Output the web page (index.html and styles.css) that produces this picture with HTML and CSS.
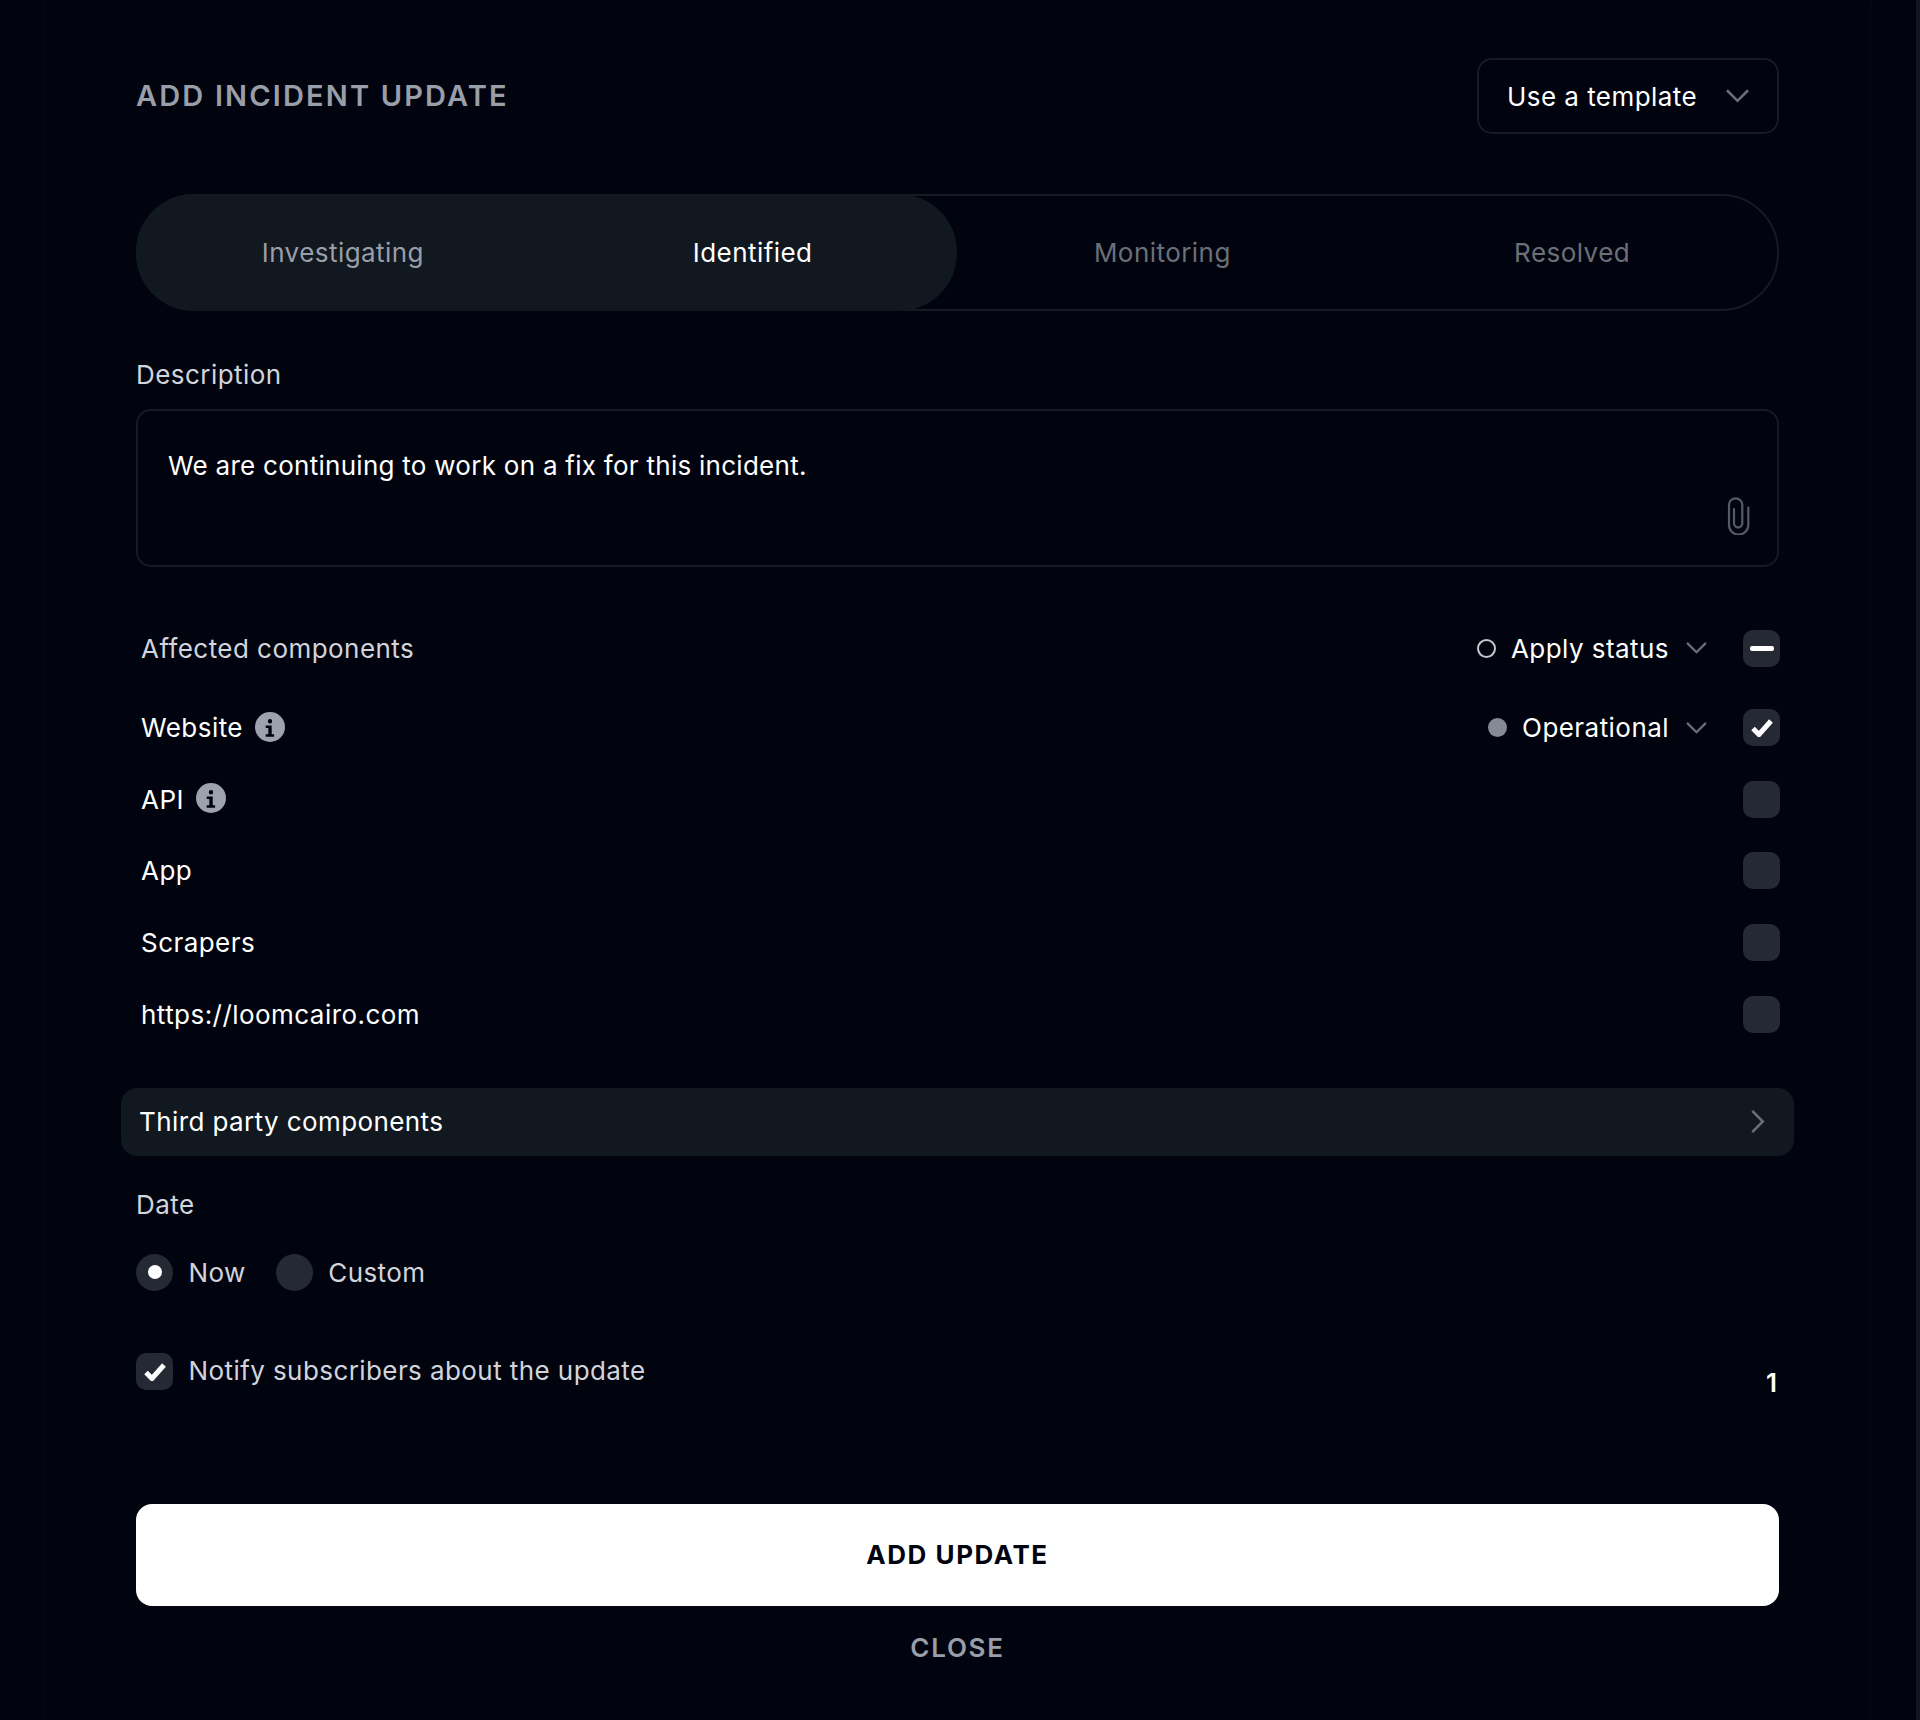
FILE: index.html
```html
<!DOCTYPE html>
<html lang="en">
<head>
    <meta charset="UTF-8">
    <meta name="viewport" content="width=device-width, initial-scale=1.0">
    <title>Add incident update</title>
    <link rel="stylesheet" href="styles.css">
</head>
<body>
    <div class="panel">
        <div class="header">
            <h1>ADD INCIDENT UPDATE</h1>
            <button type="button" class="template-btn">
                Use a template
                <svg class="chevron chevron-lg" viewBox="0 0 24 14"><path d="M1 1l11 11L23 1"/></svg>
            </button>
        </div>

        <div class="tabs">
            <div class="tab-pill"></div>
            <div class="tab tab-done">Investigating</div>
            <div class="tab tab-active">Identified</div>
            <div class="tab">Monitoring</div>
            <div class="tab">Resolved</div>
        </div>

        <div class="field-label description-label">Description</div>
        <div class="textarea">
            We are continuing to work on a fix for this incident.
            <svg class="clip" viewBox="0 0 24 38"><path d="M7 11.3V26.3a4.15 4.15 0 0 0 8.3 0V8a6.65 6.65 0 0 0-13.3 0V28a9.65 9.65 0 0 0 19.3 0V9.7"/></svg>
        </div>

        <div class="components">
            <div class="row row-head">
                <span class="row-name">Affected components</span>
                <div class="status">
                    <span class="dot dot-empty"></span>
                    Apply status
                    <svg class="chevron" viewBox="0 0 24 14"><path d="M1 1l11 11L23 1"/></svg>
                </div>
                <span class="check"><span class="dash"></span></span>
            </div>
            <div class="row">
                <span class="row-name">Website</span>
                <svg class="info" viewBox="0 0 30 30"><circle cx="15" cy="15" r="15"/><path d="M15 7a2.2 2.2 0 1 1 0 4.4 2.2 2.2 0 0 1 0-4.4zM10.7 13.5h6v8.8h2.4v2.4h-8.4v-2.4h2.6v-6.4h-2.6z"/></svg>
                <div class="status">
                    <span class="dot dot-grey"></span>
                    Operational
                    <svg class="chevron" viewBox="0 0 24 14"><path d="M1 1l11 11L23 1"/></svg>
                </div>
                <span class="check"><svg viewBox="0 0 22 19"><path d="M2 10.5l6 6L20 3"/></svg></span>
            </div>
            <div class="row">
                <span class="row-name">API</span>
                <svg class="info" viewBox="0 0 30 30"><circle cx="15" cy="15" r="15"/><path d="M15 7a2.2 2.2 0 1 1 0 4.4 2.2 2.2 0 0 1 0-4.4zM10.7 13.5h6v8.8h2.4v2.4h-8.4v-2.4h2.6v-6.4h-2.6z"/></svg>
                <span class="check check-end"></span>
            </div>
            <div class="row">
                <span class="row-name">App</span>
                <span class="check check-end"></span>
            </div>
            <div class="row">
                <span class="row-name">Scrapers</span>
                <span class="check check-end"></span>
            </div>
            <div class="row">
                <span class="row-name">https://loomcairo.com</span>
                <span class="check check-end"></span>
            </div>
        </div>

        <div class="third-party">
            Third party components
            <svg class="chevron-right" viewBox="0 0 14 24"><path d="M1 1l11 11L1 23"/></svg>
        </div>

        <div class="field-label date-label">Date</div>
        <div class="radios">
            <span class="radio radio-on"></span>
            <span class="option">Now</span>
            <span class="radio"></span>
            <span class="option">Custom</span>
        </div>

        <div class="notify">
            <span class="check"><svg viewBox="0 0 22 19"><path d="M2 10.5l6 6L20 3"/></svg></span>
            <span class="option">Notify subscribers about the update</span>
            <span class="count">1</span>
        </div>

        <button type="button" class="submit-btn">ADD UPDATE</button>
        <button type="button" class="close-btn">CLOSE</button>
    </div>
</body>
</html>
```

FILE: styles.css
```css
* {
    margin: 0;
    padding: 0;
    box-sizing: border-box;
}

body {
    font-family: Inter, 'Noto Sans', sans-serif;
    font-size: 26px;
    background: #01040e;
    color: #fff;
    height: 1720px;
    overflow: hidden;
    border-right: 4px solid #12171f;
}

.panel {
    width: 1827px;
    height: 100%;
    margin-left: 44px;
    padding: 58px 91px 0 91px;
    border-right: 1px dotted #0b0f17;
    border-left: 1px dotted #0b0f17;
}

button {
    font-family: inherit;
    border: none;
    background: none;
    cursor: pointer;
}

.header {
    display: flex;
    justify-content: space-between;
    align-items: center;
}

h1 {
    margin-bottom: 2px;
    font-size: 29px;
    font-weight: 600;
    letter-spacing: 2.15px;
    color: #9a9ea8;
}

.template-btn {
    display: flex;
    align-items: center;
    gap: 29px;
    width: 302px;
    height: 76px;
    padding-left: 28px;
    border: 2px solid #161b24;
    border-radius: 15px;
    color: #fff;
    font-size: 26px;
    letter-spacing: 0.45px;
}

.chevron {
    width: 21px;
    height: 12px;
    margin-left: 3px;
    fill: none;
    stroke: #6b6f78;
    stroke-width: 2.6;
}

.chevron-lg {
    width: 23px;
    height: 14px;
    margin-left: 0;
}

.tabs {
    position: relative;
    display: flex;
    height: 117px;
    margin-top: 60px;
    border: 2px solid #151a23;
    border-radius: 58px;
}

.tab-pill {
    position: absolute;
    left: -2px;
    top: -2px;
    width: 821px;
    height: 117px;
    border-radius: 58px;
    background: #111820;
}

.tab {
    position: relative;
    flex: 1;
    text-align: center;
    line-height: 113px;
    color: #6b6f78;
    letter-spacing: 0.45px;
}

.tab-done {
    color: #9a9ea8;
}

.tab-active {
    color: #fff;
}

.field-label {
    color: #d1d4dc;
    letter-spacing: 0.45px;
    line-height: 32px;
}

.description-label {
    margin-top: 48px;
}

.textarea {
    position: relative;
    height: 158px;
    margin-top: 18px;
    padding: 39px 30px;
    line-height: 32px;
    border: 2px solid #151a23;
    border-radius: 15px;
    letter-spacing: 0.27px;
}

.clip {
    position: absolute;
    right: 26px;
    top: 86px;
    width: 24px;
    height: 38px;
    fill: none;
    stroke: #555a65;
    stroke-width: 2.2;
}

.components {
    margin-top: 43px;
    padding-left: 5px;
    margin-right: -1px;
}

.row {
    display: flex;
    align-items: center;
    height: 71.6px;
    letter-spacing: 0.45px;
}

.row-head {
    height: 82px;
    padding-bottom: 6px;
}

.row-head .row-name {
    color: #d1d4dc;
}

.info {
    width: 30px;
    height: 30px;
    margin: 0 0 2px 12px;
    fill: #9ea2ac;
}

.info path {
    fill: #01040e;
}

.status {
    display: flex;
    align-items: center;
    gap: 14px;
    margin-left: auto;
    margin-right: 36px;
}

.dot {
    width: 19px;
    height: 19px;
    border-radius: 50%;
    margin-right: 1px;
}

.dot-empty {
    border: 2px solid #c4c7ce;
}

.dot-grey {
    background: #858993;
}

.check {
    display: flex;
    align-items: center;
    justify-content: center;
    flex-shrink: 0;
    width: 37px;
    height: 37px;
    border-radius: 10px;
    background: #242934;
}

.check-end {
    margin-left: auto;
}

.check svg {
    width: 22px;
    height: 19px;
    fill: none;
    stroke: #fff;
    stroke-width: 5;
}

.dash {
    width: 24px;
    height: 5px;
    border-radius: 2px;
    background: #fff;
}

.third-party {
    display: flex;
    align-items: center;
    justify-content: space-between;
    height: 68px;
    margin: 38px -15px 0;
    padding: 0 29px 0 18px;
    border-radius: 16px;
    background: #111820;
    letter-spacing: 0.4px;
}

.chevron-right {
    width: 14px;
    height: 23px;
    fill: none;
    stroke: #6b6f78;
    stroke-width: 2.6;
}

.date-label {
    margin-top: 33px;
}

.radios {
    display: flex;
    align-items: center;
    margin-top: 33px;
}

.radio {
    display: flex;
    align-items: center;
    justify-content: center;
    width: 37px;
    height: 37px;
    border-radius: 50%;
    background: #242934;
}

.radio-on::after {
    content: "";
    width: 14px;
    height: 14px;
    border-radius: 50%;
    background: #fff;
}

.option {
    margin: 0 30px 0 15.5px;
    color: #d1d4dc;
    letter-spacing: 0.42px;
}

.notify {
    position: relative;
    display: flex;
    align-items: center;
    margin-top: 62px;
}

.notify .option {
    margin-bottom: 2px;
}

.count {
    position: absolute;
    right: 2px;
    top: 14px;
    font-weight: 600;
}

.submit-btn {
    display: block;
    width: 100%;
    height: 102px;
    margin-top: 114px;
    border-radius: 16px;
    background: #fff;
    color: #01040e;
    font-size: 26px;
    font-weight: 700;
    letter-spacing: 1.55px;
}

.close-btn {
    display: block;
    width: 100%;
    margin-top: 26px;
    color: #9a9ea8;
    font-size: 26px;
    font-weight: 600;
    letter-spacing: 1.7px;
}
```
